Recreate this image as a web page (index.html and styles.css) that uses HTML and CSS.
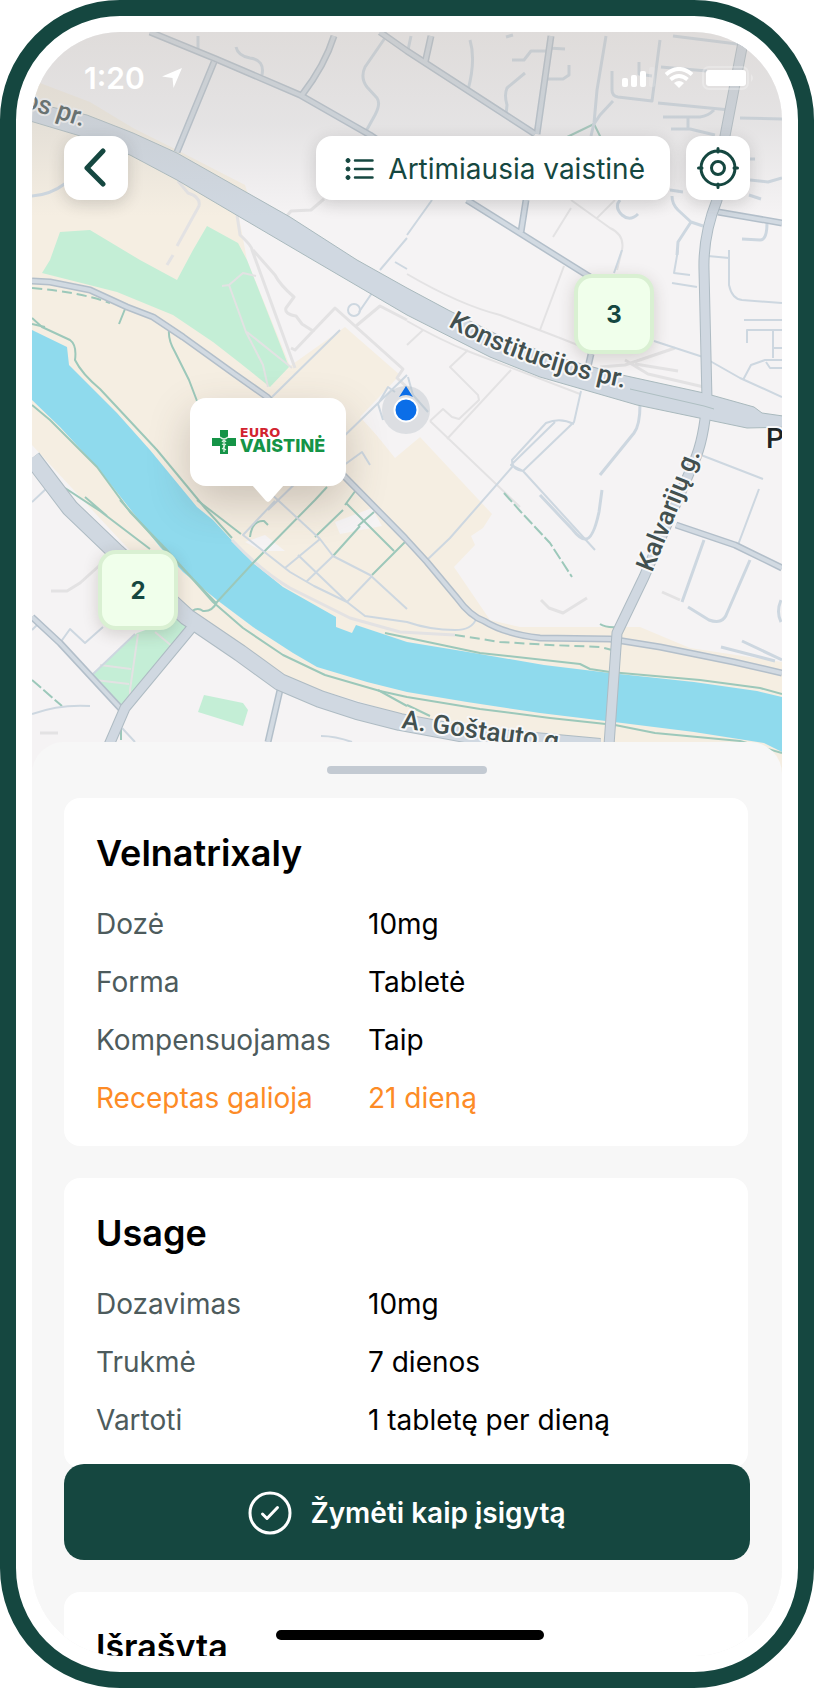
FILE: index.html
```html
<!DOCTYPE html>
<html lang="lt">
<head>
    <meta charset="UTF-8">
    <meta name="viewport" content="width=device-width, initial-scale=1.0">
    <title>Velnatrixaly</title>
    <link rel="stylesheet" href="styles.css">
</head>
<body>
    <div class="phone">
        <main class="screen">
            <section class="map-area">
                <svg class="map" viewBox="32 32 750 742" preserveAspectRatio="xMidYMid slice" aria-hidden="true">
                    <!-- land -->
                    <path class="beige" d="M32 80 L90 102 L133 128 L177 150 L245 185 L250 200 L238 212 L247 260 L290 366 L345 327 L400 375 L360 417 L395 455 L420 437 L492 514 L483 528 L471 536 L475 545 L454 567 L490 620 L520 627 L640 627 L690 648 L782 662 V774 H620 L600 740 L407 716 L280 678 L187 608 L120 540 L32 445 Z"/>
                    <path class="land" d="M362 417 L378 405 L388 400 L407 440 L420 437 L395 458 Z M335 522 L372 508 L382 526 L340 534 Z M245 542 L265 535 L285 551 H262 Z"/>
                    <path class="park" d="M60 232 L90 230 L140 260 L177 280 L193 250 L207 226 L238 243 L247 260 L289 367 L270 387 L240 363 L213 342 L173 315 L117 292 L42 273 L50 260 Z"/>
                    <path class="park" d="M137 633 L180 618 L190 628 L130 700 L122 708 L91 675 Z"/>
                    <path class="park" d="M204 695 L243 703 L248 710 L243 726 L198 712 Z"/>
                    <path class="water" d="M32 330 L67 347 L69 365 L117 413 L150 450 L197 507 L213 520 L253 563 L283 587 L336 617 V627 L352 633 L356 625 L407 642 L474 653 L544 665 L610 673 L694 682 L757 691 L782 697 V752 L764 743 L694 732 L614 722 L540 713 L467 702 L407 692 L367 682 L317 667 L293 653 L253 627 L217 600 L183 572 L160 547 L123 500 L97 467 L60 427 L32 400 Z"/>

                    <!-- footways -->
                    <g class="walk">
                        <path d="M237 215 L240 235 Q252 246 252 250 L295 368 M253 250 L275 275 Q280 285 294 297 L286 308 Q284 314 296 316 L302 324 L313 331 L295 350 L291 348"/>
                        <path d="M313 331 L335 308 L403 369 L397 378 L410 390 M356 326 L380 306 L407 320"/>
                        <path d="M177 246 L199 206 Q201 197 188 193 L178 181 M167 265 L173 255"/>
                        <path d="M222 286 L229 285 L243 273 L256 276 M229 285 L246 332 L263 365 L268 387 M247 332 L292 368" stroke-width="2"/>
                        <path d="M286 217 L291 211 L311 210 L324 199"/>
                        <path d="M407 274 Q460 305 500 315 L560 338 L580 346 M540 330 L564 266 M553 237 L571 208 M596 219 L615 200 M571 200 L610 228 Q625 235 622 250 L617 270" stroke-width="2"/>
                        <path d="M407 345 L423 330 M468 350 L450 367 L478 395 L479 400 L459 419 L452 417 L443 409 L430 421 M511 370 L447 439 M430 421 L520 507 M407 321 Q440 340 470 352 L580 394" stroke-width="2"/>
                        <path d="M600 367 L625 365 L675 348 M635 364 L678 371 M625 360 L648 374 L704 387"/>
                        <path d="M51 591 H67 L80 583 L100 565 M40 733 H58 M541 600 L549 608 L563 613 L587 598 M662 592 L680 600"/>
                        <path d="M232 540 Q260 570 290 588 L350 618 L400 632 L455 635"/>
                        <path d="M100 665 L131 669 M95 680 L129 684 M138 634 L130 690 V700 M155 632 L173 647" stroke-width="2"/>
                    </g>

                    <!-- green paths -->
                    <g class="trail">
                        <path d="M32 318 L42 327 L70 340 Q77 345 75 360 Q82 374 100 389 L157 450 L205 508 L232 538"/>
                        <path d="M32 324 L45 327 M125 309 L119 324 M169 330 Q168 340 175 352 L189 380 L197 401"/>
                        <path d="M32 405 L50 420 L97 467 L130 512 L165 548 L213 602 L243 628 L283 655 L325 675 L380 691 L407 697 L480 709 L550 718 L615 725 L655 733 L740 741 L782 753"/>
                        <path d="M65 488 L100 511 L150 549 M85 497 L107 516 M120 500 L165 550 L217 604 M192 611 Q198 607 203 611 Q212 612 217 602 L253 563 L315 500 L327 487"/>
                        <path d="M346 503 L394 551 M345 505 L356 490 M315 537 L343 510 M333 556 L360 526 M358 526 L374 512 M372 575 L405 542 M197 500 L241 534 M250 537 Q252 520 264 521 L268 525"/>
                        <path d="M385 633 L480 653 L580 664 L590 669 L610 672 L700 680 L760 688 L782 694"/>
                        <path d="M32 680 L62 706 M121 728 V742 M504 493 L521 512 L550 543 L572 577" stroke-dasharray="12 3"/>
                        <path d="M32 288 Q80 292 110 303 M455 635 L500 642 L550 645 L600 647 L612 650" stroke-dasharray="10 5"/>
                        <path d="M600 624 Q606 628 618 627 M565 138 L594 124 L601 138 M407 705 L430 716 M378 690 L407 706"/>
                    </g>

                    <!-- small streets -->
                    <g class="lane">
                        <path d="M32 196 Q50 195 66 183 M198 36 V52 M236 47 Q238 56 250 58 Q265 60 262 75 M385 38 L365 67 Q360 78 367 87 L377 98 Q381 104 375 115 L365 133" stroke-width="3"/>
                        <path d="M411 36 L408 50 M470 40 Q476 60 468 90 M506 37 L513 35 M512 60 H524 L531 51 H547 M548 48 L565 49 M569 65 V75 L563 79 H548 M525 73 L507 88 Q504 95 507 105 L506 115" stroke-width="3"/>
                        <path d="M606 36 L597 90 L594 123 L591 136 M613 101 L600 115 L594 124 M612 71 V90 Q612 96 618 97 L652 101 L660 40 M639 62 V74 L652 76 M661 67 L707 71 M658 103 L730 110 M663 117 H700 Q708 116 714 110 M688 117 V129 M671 129 H690 L715 135" stroke-width="3"/>
                        <path d="M673 36 L745 45 M740 118 L782 119 M755 159 H750 M750 180 L768 182 L782 178 M670 190 L683 192 M672 196 Q672 204 678 210 L691 222 L703 226 M691 222 L678 242 L677 255 M749 195 L761 199" stroke-width="3"/>
                        <path d="M620 200 Q614 207 622 215 Q630 222 638 214 M767 223 Q767 240 760 240 L742 239" stroke-width="3"/>
                        <path d="M729 250 V258 M708 256 L729 258 V285 Q732 299 742 300 L782 303 M678 250 L674 273 L690 275 M672 283 L697 287"/>
                        <path d="M622 250 L614 273 M654 341 L703 357 L740 378 L782 397 M744 320 H782 M747 343 V330 H782 M773 330 V358 M773 348 H782 M743 380 L751 365 L765 360 H782 M766 362 L770 368 H782"/>
                        <path d="M432 200 L407 235 M407 238 L380 270 M395 262 L407 269 M372 293 L359 312"/>
                        <circle cx="354" cy="310" r="6"/>
                        <path d="M581 391 L574 422 L523 471 M574 424 Q560 417 546 423 L512 460 Q512 470 523 471 L595 550 M523 471 L511 465 L555 422"/>
                        <path d="M640 405 Q640 425 634 433 L600 475 M602 490 L599 512 Q593 540 585 539 Q580 539 573 530 L540 495" stroke-width="3"/>
                        <path d="M513 466 L450 538 L427 560 M701 455 L763 479 M759 489 L738 545"/>
                        <path d="M704 540 L682 602 M688 607 L709 620 Q723 625 727 613 L750 560 M742 641 L782 660 M721 647 L775 661 M781 600 Q776 612 781 622" stroke-width="3"/>
                        <path d="M340 330 L272 397 M268 510 L407 375 M408 377 L413 395 L428 412 M378 404 L388 387 L395 392 M378 404 L383 420 M340 468 L362 452 L370 465"/>
                        <path d="M268 491 L320 539 L333 556 L370 575 L407 609 M275 501 L243 535 L290 572 L314 586 L347 602 L372 576 M285 568 L320 539 M298 555 L347 602 M306 582 L333 556 M347 602 L365 616 L407 622 Q430 630 455 630 Q472 630 476 619"/>
                        <path d="M60 643 L70 629 L85 643 L103 627 M92 675 L135 634 M32 714 Q60 704 90 706 M122 728 L135 742 M32 630 L38 624 M321 736 Q335 736 352 742 M32 502 L48 487"/>
                    </g>

                    <!-- medium streets: casing below, fill above -->
                    <g class="street-edge">
                        <path id="s1" d="M32 281 L50 282 L90 290 L127 307 L153 317 L183 337 L233 373 L267 397 L345 477 L405 538 L427 562 L457 598 Q470 616 484 621 Q505 634 540 638 L610 639 L660 647 L734 662 L782 673"/>
                        <path id="s2" d="M150 32 L216 59 L300 95 L370 135 L407 160"/>
                        <path id="s3" d="M380 32 L407 51 L535 134 M467 200 L590 277"/>
                        <path id="s4" d="M214 62 L177 152 M334 36 Q325 65 302 95 M431 36 L425 63 M551 36 L537 134 M526 200 L521 232"/>
                        <path id="s5" d="M32 617 L60 643 L122 710 M280 690 L268 742 M676 525 L735 545 L782 568 M718 212 L782 223 M591 354 L588 367"/>
                    </g>
                    <g class="street">
                        <use href="#s1"/><use href="#s2"/><use href="#s3"/><use href="#s4"/><use href="#s5"/>
                    </g>

                    <!-- main roads -->
                    <g class="road-edge">
                        <path d="M32 458 L70 508 L117 553 L187 617 L240 653 L280 682 L320 699 L357 711 L400 722 L470 735 L600 747" stroke-width="18"/>
                        <path d="M745 32 L725 136 L717 200 Q703 235 704 270 L707 400 Q704 440 694 462 L644 577 L617 633 L609 745" stroke-width="11"/>
                        <path d="M193 626 L125 708 L109 745" stroke-width="11"/>
                    </g>
                    <path class="avenue" d="M20 100 L87 115 L133 133 L177 153 L290 217 L357 260 L407 288 L450 311 L500 336 L560 358 L622 375 L704 393 L754 407 L762 413 L790 417 V427 L747 428 L704 419 L637 405 L540 377 L490 357 L407 315 L313 260 L233 213 L177 180 L130 155 L77 135 L20 118 Z"/>
                    <g class="road">
                        <path d="M32 458 L70 508 L117 553 L187 617 L240 653 L280 682 L320 699 L357 711 L400 722 L470 735 L600 747" stroke-width="16"/>
                        <path d="M745 32 L725 136 L717 200 Q703 235 704 270 L707 400 Q704 440 694 462 L644 577 L617 633 L609 745" stroke-width="9"/>
                        <path d="M193 626 L125 708 L109 745" stroke-width="9"/>
                    </g>
                    <path class="divider" d="M630 389 L704 406 L714 409"/>

                    <!-- street names -->
                    <path id="nameLine" fill="none" d="M448 326 Q520 369 650 393"/>
                    <text class="street-name"><textPath href="#nameLine">Konstitucijos pr.</textPath></text>
                    <text class="street-name" transform="translate(652 573) rotate(-68)">Kalvarijų g.</text>
                    <text class="street-name" transform="translate(401 728) rotate(8)">A. Goštauto g.</text>
                    <text class="street-name" transform="translate(22 107) rotate(18)">os pr.</text>
                    <text class="place-name" x="766" y="448">P</text>

                    <!-- current position -->
                    <circle cx="406" cy="410" r="24" fill="#b4bdc4" fill-opacity="0.38"/>
                    <path d="M406 386 L413 397 Q406 393 399 397 Z" fill="#0b6ee8"/>
                    <circle cx="406" cy="410" r="11.5" fill="#0b6ee8" stroke="#fff" stroke-width="2"/>
                </svg>

                <header class="top">
                    <div class="status-bar">
                        <div class="clock">
                            <span>1:20</span>
                            <svg width="22" height="22" viewBox="0 0 22 22"><path d="M21 1 L12.500 21 L11.500 11 L1 9.500 Z" fill="#fff"/></svg>
                        </div>
                        <div class="signals">
                            <svg width="34" height="22" viewBox="0 0 34 22" fill="#fff">
                                <rect x="0" y="11" width="6" height="9" rx="2"/>
                                <rect x="9" y="8" width="6" height="12" rx="2"/>
                                <rect x="18" y="4" width="6" height="16" rx="2"/>
                                <rect x="27" y="0" width="6" height="20" rx="2" fill-opacity="0.15"/>
                            </svg>
                            <svg width="30" height="22" viewBox="0 0 30 22" fill="none" stroke="#fff" stroke-width="4">
                                <path d="M2 7.500 Q15 -3.500 28 7.500"/>
                                <path d="M6.500 12.500 Q15 5.500 23.500 12.500"/>
                                <path d="M15 21 L10 16 Q15 12 20 16 Z" fill="#fff" stroke="none"/>
                            </svg>
                            <svg width="54" height="24" viewBox="0 0 54 24">
                                <rect x="1" y="1" width="45" height="22" rx="6" fill="none" stroke="#fff" stroke-opacity="0.25" stroke-width="2"/>
                                <rect x="4" y="4" width="40" height="16" rx="3" fill="#fff"/>
                                <path d="M49 8 Q53 12 49 16 Z" fill="#fff" fill-opacity="0.3"/>
                            </svg>
                        </div>
                    </div>
                    <nav class="toolbar">
                        <button class="tool square" aria-label="Atgal">
                            <svg width="40" height="40" viewBox="0 0 40 40"><path d="M27 3 L11 20 L27 36" fill="none" stroke="#154740" stroke-width="5" stroke-linecap="round" stroke-linejoin="round"/></svg>
                        </button>
                        <button class="tool nearest">
                            <svg width="30" height="24" viewBox="0 0 30 24" fill="#154740" stroke="#154740">
                                <circle cx="4" cy="3.500" r="2"/><circle cx="4" cy="12" r="2"/><circle cx="4" cy="20.500" r="2"/>
                                <path d="M11 3.500 H28.500 M11 12 H28.500 M11 20.500 H28.500" stroke-width="2.500" stroke-linecap="round"/>
                            </svg>
                            Artimiausia vaistinė
                        </button>
                        <button class="tool square" aria-label="Mano vieta">
                            <svg width="44" height="44" viewBox="0 0 44 44" fill="none" stroke="#154740" stroke-width="3" stroke-linecap="round">
                                <circle cx="22" cy="22" r="17"/><circle cx="22" cy="22" r="6.500"/>
                                <path d="M22 2.500 V6 M22 38 V41.500 M2.500 22 H6 M38 22 H41.500"/>
                            </svg>
                        </button>
                    </nav>
                </header>

                <button class="pin pin-three">3</button>
                <button class="pin pin-two">2</button>

                <button class="pharmacy" aria-label="Euro Vaistinė">
                    <svg width="26" height="26" viewBox="0 0 26 26">
                        <path d="M9 1 H17 V9 H25 V17 H17 V25 H9 V17 H1 V9 H9 Z" fill="#159447"/>
                        <path d="M9 8 Q13 12 17 8 M11 13 Q13 10 15 13 M13 11 V23 M11 15 Q16 17 11 20 M15 15 Q10 18 15 21" fill="none" stroke="#d9f0df" stroke-width="1.300"/>
                    </svg>
                    <span class="logo-text">
                        <span class="logo-euro">EURO</span>
                        <span class="logo-vaistine">VAISTINĖ</span>
                    </span>
                </button>
            </section>

            <section class="sheet">
                <div class="handle"></div>

                <article class="card">
                    <h2>Velnatrixaly</h2>
                    <dl>
                        <dt>Dozė</dt><dd>10mg</dd>
                        <dt>Forma</dt><dd>Tabletė</dd>
                        <dt>Kompensuojamas</dt><dd>Taip</dd>
                        <dt class="warning">Receptas galioja</dt><dd class="warning">21 dieną</dd>
                    </dl>
                </article>

                <article class="card">
                    <h2>Usage</h2>
                    <dl>
                        <dt>Dozavimas</dt><dd>10mg</dd>
                        <dt>Trukmė</dt><dd>7 dienos</dd>
                        <dt>Vartoti</dt><dd>1 tabletę per dieną</dd>
                    </dl>
                </article>

                <button class="purchase">
                    <svg width="44" height="44" viewBox="0 0 44 44" fill="none" stroke="#fff" stroke-width="3" stroke-linecap="round" stroke-linejoin="round">
                        <circle cx="22" cy="22" r="20"/>
                        <path d="M14.500 23 L19 27.500 L29.500 16.500"/>
                    </svg>
                    Žymėti kaip įsigytą
                </button>

                <article class="card card-next">
                    <h2>Išrašyta</h2>
                </article>
            </section>

            <div class="home-indicator"></div>
        </main>
    </div>
</body>
</html>
```

FILE: styles.css
```css
* {
    box-sizing: border-box;
}

body {
    margin: 0;
    background: #fff;
    font-family: Inter, "Liberation Sans", sans-serif;
}

button {
    border: none;
    padding: 0;
    font-family: inherit;
    cursor: pointer;
}

svg {
    flex-shrink: 0;
}

.phone {
    height: 100vh;
    padding: 16px;
    border: 16px solid #154740;
    border-radius: 120px;
    background: #fff;
}

.screen {
    position: relative;
    height: 100%;
    overflow: hidden;
    border-radius: 88px;
    background: #f7f7f7;
}

/* map */
.map-area {
    position: relative;
    height: 742px;
    background: #f5f3f4;
}

.map {
    position: absolute;
    top: 0;
    left: 0;
    width: 100%;
    height: 100%;
}

.land { fill: #f5f3f4; }
.beige { fill: #f5eee2; }
.park { fill: #c4eed6; }
.water { fill: #8fdaed; }

.walk,
.trail,
.lane,
.street,
.street-edge,
.road,
.road-edge {
    fill: none;
    stroke-linejoin: round;
}

.walk {
    stroke: #e3e2e3;
    stroke-width: 3px;
}

.trail {
    stroke: #9cc8ba;
    stroke-width: 2px;
}

.lane {
    stroke: #cdd7e0;
    stroke-width: 2px;
}

.street-edge {
    stroke: #b3bfca;
    stroke-width: 7px;
}

.street {
    stroke: #d2dae2;
    stroke-width: 4px;
}

.road-edge {
    stroke: #aebbc3;
}

.road {
    stroke: #d0d8e1;
}

.avenue {
    fill: #d0d8e1;
    stroke: #a9b9bd;
    stroke-width: 1px;
}

.divider {
    fill: none;
    stroke: #aebfc2;
}

.street-name,
.place-name {
    font-family: Roboto, sans-serif;
    font-size: 26px;
    font-weight: 500;
    fill: #42504f;
    stroke: #f7f7f8;
    stroke-width: 4px;
    stroke-linejoin: round;
    paint-order: stroke;
}

.place-name {
    font-size: 28px;
    fill: #1d2425;
}

/* status bar and tools */
.top {
    position: relative;
    height: 184px;
    padding: 32px;
    background: linear-gradient(rgba(190, 185, 180, 0.4), rgba(190, 190, 190, 0.3) 50%, rgba(200, 195, 190, 0));
}

.status-bar {
    display: flex;
    align-items: center;
    justify-content: space-between;
    height: 28px;
    margin-right: -6px;
    padding-left: 20px;
    color: #fff;
    font-size: 30px;
    font-weight: 600;
    line-height: 28px;
}

.clock,
.signals {
    display: flex;
    align-items: center;
}

.clock {
    gap: 16px;
}

.signals {
    gap: 8px;
}

.toolbar {
    display: flex;
    gap: 16px;
    margin-top: 44px;
}

.tool {
    display: flex;
    align-items: center;
    justify-content: center;
    height: 64px;
    border-radius: 16px;
    background: #fff;
    color: #154740;
    font-size: 28px;
    box-shadow: 0 4px 16px rgba(40, 40, 40, 0.18);
}

.square {
    width: 64px;
}

.nearest {
    gap: 14px;
    margin-left: auto;
    padding: 2px 25px 0 28px;
}

/* pins */
.pin {
    position: absolute;
    width: 80px;
    height: 80px;
    border: 4px solid #d9f0d2;
    border-radius: 18px;
    background: #f0ffeb;
    color: #154740;
    font-size: 24px;
    font-weight: 700;
    box-shadow: 0 4px 16px rgba(60, 50, 40, 0.18);
}

.pin-three {
    top: 242px;
    left: 542px;
}

.pin-two {
    top: 518px;
    left: 66px;
}

.pharmacy {
    position: absolute;
    top: 366px;
    left: 158px;
    display: flex;
    align-items: center;
    justify-content: center;
    gap: 3px;
    width: 156px;
    height: 88px;
    border-radius: 16px;
    background: #fff;
    box-shadow: 0 16px 40px rgba(80, 65, 55, 0.25);
}

.pharmacy::after {
    content: "";
    position: absolute;
    top: 87px;
    left: 62px;
    width: 32px;
    height: 17px;
    background: #fff;
    clip-path: polygon(0 0, 100% 0, 56% 94%, 50% 100%, 44% 94%);
}

.logo-text {
    display: flex;
    flex-direction: column;
    align-items: flex-start;
}

.logo-euro {
    color: #d2232f;
    font-family: "DejaVu Sans", sans-serif;
    font-size: 13px;
    font-weight: 700;
    line-height: 8px;
}

.logo-vaistine {
    color: #159447;
    font-size: 18px;
    font-weight: 800;
    line-height: 18px;
}

/* sheet */
.sheet {
    position: relative;
    display: flex;
    flex-direction: column;
    gap: 32px;
    margin-top: -32px;
    padding: 24px 32px 32px;
    border-radius: 32px 32px 0 0;
    background: #f7f7f7;
}

.handle {
    align-self: center;
    width: 160px;
    height: 8px;
    margin-bottom: -8px;
    border-radius: 4px;
    background: #c3cad2;
}

.card {
    margin-right: 2px;
    padding: 33px 32px 31px;
    border-radius: 16px;
    background: #fff;
}

.card h2 {
    margin: 0;
    font-size: 36px;
    font-weight: 600;
    line-height: 44px;
}

.card-next h2 {
    font-size: 34px;
}

.card dl {
    display: grid;
    grid-template-columns: 272px 1fr;
    row-gap: 24px;
    margin: 32px 0 0;
    font-size: 28px;
    line-height: 34px;
}

.card dt {
    color: #4d5b5c;
}

.card dd {
    margin: 0;
}

.card .warning {
    color: #fd8b26;
}

.purchase {
    display: flex;
    align-items: center;
    justify-content: center;
    gap: 18px;
    height: 96px;
    margin-top: -36px;
    padding-top: 2px;
    border-radius: 20px;
    background: #154740;
    color: #fff;
    font-size: 28px;
    font-weight: 600;
    z-index: 1;
}

.home-indicator {
    position: absolute;
    bottom: 16px;
    left: 244px;
    width: 268px;
    height: 10px;
    border-radius: 5px;
    background: #000;
}
```
